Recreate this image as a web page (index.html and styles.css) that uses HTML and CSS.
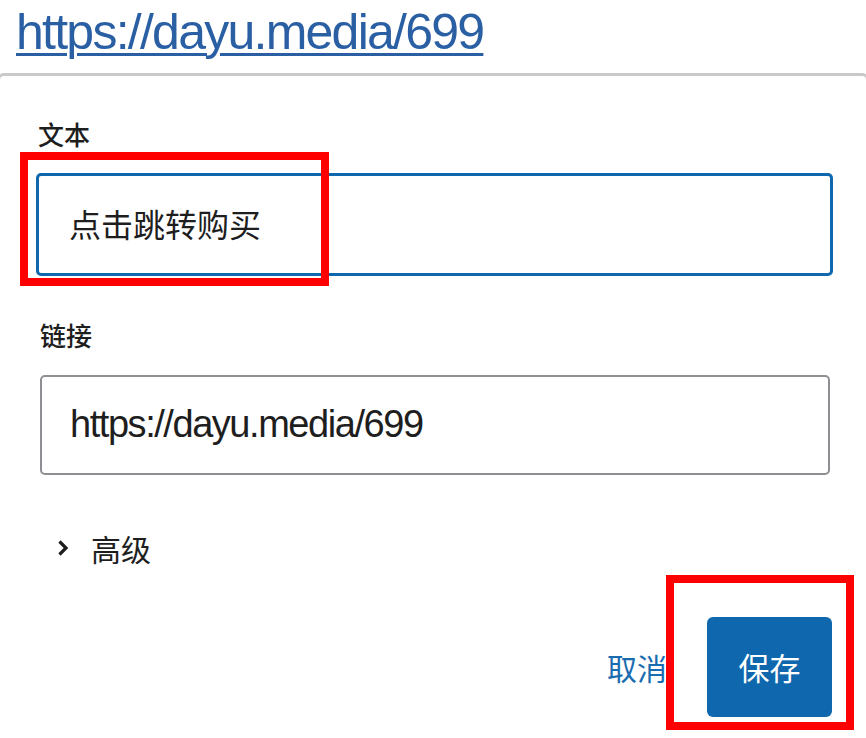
FILE: index.html
```html
<!DOCTYPE html>
<html lang="zh-CN">
<head>
<meta charset="utf-8">
<title>链接设置</title>
<link rel="stylesheet" href="styles.css">
</head>
<body>
<div class="page">
  <div class="url-preview">
    <a class="url-link" href="#">https://dayu.media/699</a>
  </div>
  <div class="popover">
    <div class="field field-text">
      <label class="field-label" for="link-text">文本</label>
      <input class="control control-focused" id="link-text" type="text" value="点击跳转购买">
    </div>
    <div class="field field-url">
      <label class="field-label" for="link-url">链接</label>
      <input class="control control-url" id="link-url" type="text" value="https://dayu.media/699">
    </div>
    <button class="advanced" type="button">
      <svg class="chevron" width="14" height="18" viewBox="0 0 14 18" aria-hidden="true"><path d="M3.5 2.5 L10 9 L3.5 15.5" fill="none" stroke="#1e1e1e" stroke-width="3.2" stroke-linejoin="miter"/></svg>
      <span>高级</span>
    </button>
    <div class="actions">
      <button class="btn-cancel" type="button">取消</button>
      <button class="btn-save" type="button">保存</button>
    </div>
  </div>
  <div class="mark mark-text"></div>
  <div class="mark mark-save"></div>
</div>
</body>
</html>
```
FILE: styles.css
```css
* { box-sizing: border-box; }
html, body { margin: 0; padding: 0; background: #fff; }
body {
  font-family: "Liberation Sans", "Noto Sans CJK SC", sans-serif;
  color: #1e1e1e;
  overflow: hidden;
}
.page {
  position: relative;
  width: 866px;
  height: 738px;
  overflow: hidden;
}
.url-preview {
  height: 73px;
  padding-left: 16px;
  padding-top: 4px;
}
.url-link {
  font-family: "Liberation Sans", sans-serif;
  font-size: 50px;
  letter-spacing: -1.75px;
  line-height: 56px;
  color: #2b5fa4;
  text-decoration: underline;
  text-decoration-thickness: 3px;
  text-underline-offset: 4px;
}
.popover {
  margin: 0 -3px;
  border: 3px solid #c9c9c9;
  border-bottom: none;
  border-radius: 7px 7px 0 0;
  padding: 43px 33px 0 36px;
  height: 670px;
}
.field { display: flex; flex-direction: column; }
.field-label {
  font-family: "Noto Sans CJK SC", sans-serif;
  font-size: 26px;
  font-weight: 500;
  line-height: 30px;
  color: #1e1e1e;
  padding-left: 2px;
}
.control {
  font-family: "Liberation Sans", "Noto Sans CJK SC", sans-serif;
  color: #1e1e1e;
  background: #fff;
  outline: none;
  margin: 0;
}
.control-focused {
  margin-top: 24px;
  height: 103px;
  border: 3px solid #0f68ad;
  border-radius: 5px;
  padding: 0 0 4px 30px;
  font-family: "Noto Sans CJK SC", sans-serif;
  font-size: 32px;
}
.field-url { margin-top: 44px; padding-left: 4px; padding-right: 3px; }
.field-url .field-label { padding-left: 0; }
.control-url {
  margin-top: 25px;
  height: 100px;
  border: 2px solid #8d8f93;
  border-radius: 5px;
  padding: 0 0 2px 28px;
  font-size: 38px;
  letter-spacing: -1.45px;
}
.advanced {
  display: flex;
  align-items: center;
  gap: 21px;
  margin: 55px 0 0 20px;
  padding: 0;
  border: none;
  background: none;
  font-family: "Noto Sans CJK SC", sans-serif;
  font-size: 30px;
  line-height: 36px;
  color: #1e1e1e;
}
.chevron { display: block; }
.actions {
  display: flex;
  justify-content: flex-end;
  align-items: center;
  gap: 40px;
  margin-top: 51px;
  padding-right: 1px;
}
.btn-cancel {
  border: none;
  background: none;
  padding: 0;
  font-family: "Noto Sans CJK SC", sans-serif;
  font-size: 30px;
  color: #1a6cb0;
}
.btn-save {
  width: 125px;
  height: 100px;
  border: none;
  border-radius: 6px;
  background: #0f68ad;
  color: #fff;
  font-family: "Noto Sans CJK SC", sans-serif;
  font-size: 31px;
  padding: 0 0 2px;
}
.mark {
  position: absolute;
  border: 8px solid #ff0000;
  pointer-events: none;
}
.mark-text { left: 20px; top: 152px; width: 309px; height: 134px; }
.mark-save { left: 666px; top: 575px; width: 188px; height: 155px; }
```
